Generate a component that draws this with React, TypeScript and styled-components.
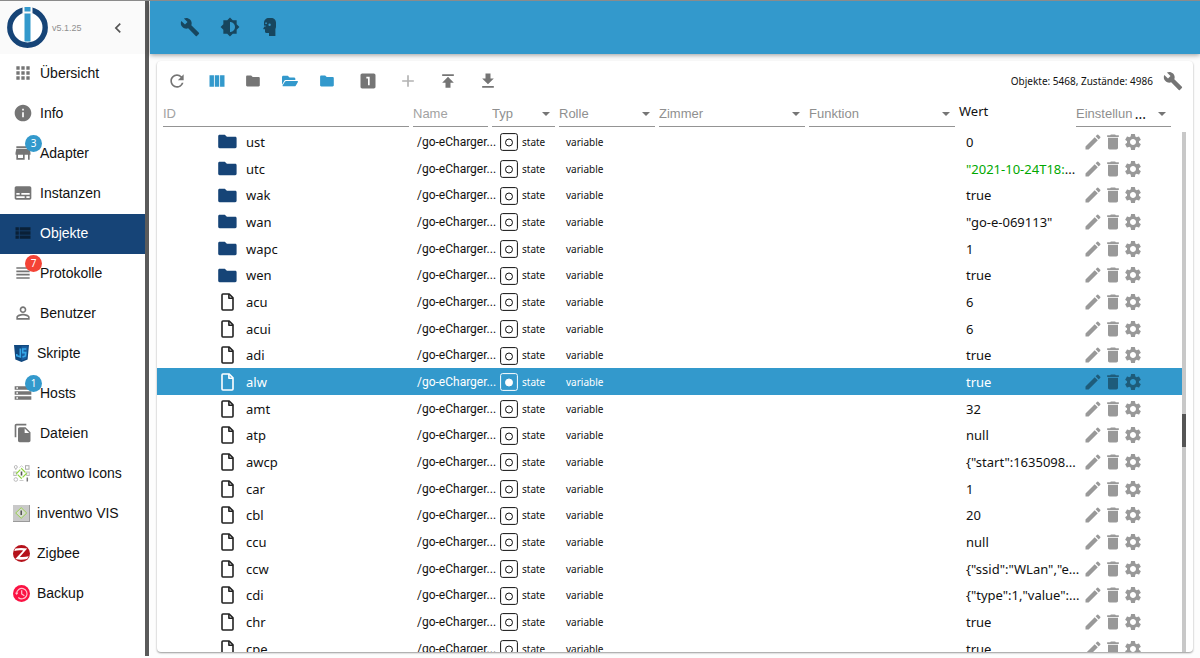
import React from "react";
import styled, { createGlobalStyle, css } from "styled-components";
import {
  MdAdd,
  MdApps,
  MdBrightness6,
  MdBuild,
  MdChevronLeft,
  MdDelete,
  MdEdit,
  MdFileCopy,
  MdFolder,
  MdGetApp,
  MdInfo,
  MdLooksOne,
  MdPermIdentity,
  MdPublish,
  MdRefresh,
  MdSettings,
  MdStorage,
  MdStore,
  MdSubtitles,
  MdViewColumn,
  MdViewHeadline,
  MdViewList,
} from "react-icons/md";
import { FaFolderOpen } from "react-icons/fa";

const blue = "#3399cc";
const navy = "#164477";
const iconGrey = "rgba(0, 0, 0, 0.54)";
const sans = `"Liberation Sans", Arial, sans-serif`;
const humanist = `"Noto Sans", Tahoma, sans-serif`;
const narrow = `Roboto, Tahoma, sans-serif`;

const GlobalStyle = createGlobalStyle`
  *, *::before, *::after { box-sizing: border-box; }
  body { margin: 0; background: #fff; color: #111; font-family: ${sans}; font-size: 13px; }
  button, input, select { font: inherit; color: inherit; margin: 0; padding: 0; border: 0; background: none; border-radius: 0; }
  button { cursor: pointer; }
  svg { display: block; flex: none; }
`;

const Shell = styled.div`
  display: flex;
  height: 100vh;
  overflow: hidden;
  border-top: 1px solid #8b8b8b;
`;

/* ---------- sidebar ---------- */

const Sidebar = styled.aside`
  flex: none;
  width: 145px;
  background: #fff;
`;

const Resizer = styled.div`
  flex: none;
  width: 4px;
  margin: 0 1px 2px 0;
  background: #5b5b5b;
`;

const Brand = styled.div`
  display: flex;
  align-items: center;
  height: 53px;
  padding: 0 17px 0 7px;
  background: #fafafa;
`;

const Version = styled.span`
  flex: 1;
  padding-left: 4px;
  font-size: 9px;
  color: #8f8f8f;
`;

const Collapse = styled.button`
  color: #555;
`;

const Menu = styled.nav`
  display: flex;
  flex-direction: column;
`;

const MenuItem = styled.a<{ $active?: boolean }>`
  display: flex;
  align-items: center;
  gap: 7px;
  height: 40px;
  padding: 0 0 2px 13px;
  text-decoration: none;
  white-space: nowrap;
  font-size: 14px;
  color: ${(p) => (p.$active ? "#fff" : "#111")};
  background: ${(p) => (p.$active ? navy : "transparent")};
`;

const MenuIcon = styled.span<{ $active?: boolean }>`
  position: relative;
  color: ${(p) => (p.$active ? "#0a2037" : iconGrey)};
`;

const Badge = styled.span<{ $color: string }>`
  position: absolute;
  top: -8px;
  right: -9px;
  width: 17px;
  height: 17px;
  border-radius: 9px;
  background: ${(p) => p.$color};
  color: #fff;
  font-family: ${humanist};
  font-size: 10px;
  line-height: 17px;
  text-align: center;
`;

/* ---------- main area ---------- */

const Main = styled.main`
  display: flex;
  flex: 1;
  flex-direction: column;
  min-width: 0;
  background: #fdfdfd;
`;

const AppBar = styled.header`
  display: flex;
  flex: none;
  align-items: center;
  gap: 20px;
  height: 53px;
  padding: 0 0 2px 30px;
  background: ${blue};
  box-shadow: 0 1px 5px rgba(0, 0, 0, 0.4);
  z-index: 1;
`;

const BarButton = styled.button`
  color: ${iconGrey};
`;

const Card = styled.section`
  display: flex;
  flex: 1;
  flex-direction: column;
  min-height: 0;
  margin: 7px 7px 6px;
  border-radius: 4px;
  overflow: hidden;
  background: #fff;
  box-shadow: 0 1px 2px rgba(0, 0, 0, 0.4);
`;

const Toolbar = styled.div`
  display: flex;
  flex: none;
  align-items: center;
  height: 40px;
  padding-bottom: 1px;
`;

const ToolButton = styled.button<{ $compact?: boolean; $color?: string }>`
  display: flex;
  justify-content: center;
  width: ${(p) => (p.$compact ? 37 : 40)}px;
  padding-right: ${(p) => (p.$compact ? 6 : 0)}px;
  color: ${(p) => p.$color ?? iconGrey};
`;

const Stats = styled.span`
  margin-left: auto;
  font-family: ${humanist};
  font-size: 10px;
`;

const Content = styled.div`
  display: flex;
  flex: 1;
  min-height: 0;
  padding-right: 7px;
`;

const Scroller = styled.div`
  flex: 1;
  min-width: 0;
  overflow: hidden;
`;

const ScrollTrack = styled.div`
  display: flex;
  flex: none;
  flex-direction: column;
  width: 4px;
  margin-top: 31px;
  background: #c8c8c8;
`;

const ScrollThumb = styled.div`
  height: 33px;
  margin-top: 282px;
  background: #555;
`;

const Table = styled.table`
  width: 100%;
  table-layout: fixed;
  border-collapse: collapse;
  font-family: ${humanist};
  font-size: 13px;
  line-height: 20px;
`;

const Col = styled.col<{ $width?: number }>`
  width: ${(p) => (p.$width ? `${p.$width}px` : "auto")};
`;

const Head = styled.th<{ $first?: boolean; $last?: boolean }>`
  height: 27px;
  padding: 0 ${(p) => (p.$last ? 11 : 2)}px 0 ${(p) => (p.$first ? 6 : 2)}px;
  font-weight: 400;
  text-align: left;
  vertical-align: top;
`;

const fieldLook = css`
  display: block;
  width: 100%;
  height: 26px;
  border-bottom: 1px solid #949494;
  outline: 0;
  font-family: ${sans};
  font-size: 13px;
  color: #8f8f8f;
`;

const FilterInput = styled.input`
  ${fieldLook}
  &::placeholder { color: #a2a2a2; opacity: 1; }
`;

const SelectWrap = styled.span`
  position: relative;
  display: block;
`;

const FilterSelect = styled.select`
  ${fieldLook}
  appearance: none;
`;

const SelectTail = styled.span`
  position: absolute;
  top: 0;
  right: 5px;
  display: flex;
  align-items: center;
  gap: 12px;
  height: 26px;
  font-size: 14px;
  pointer-events: none;
`;

const Row = styled.tr<{ $selected?: boolean }>`
  height: 27px;
  &:nth-child(3n) { height: 26px; }
  background: ${(p) => (p.$selected ? blue : "transparent")};
  color: ${(p) => (p.$selected ? "#fff" : "#111")};
`;

const Cell = styled.td<{ $indent?: number; $size?: number }>`
  padding: 0 0 0 ${(p) => p.$indent ?? 0}px;
  white-space: nowrap;
  vertical-align: middle;
  font-size: ${(p) => p.$size ?? 13}px;
`;

const NameCell = styled(Cell)`
  font-family: ${narrow};
`;

const Inline = styled.div<{ $gap?: number }>`
  display: flex;
  align-items: center;
  gap: ${(p) => p.$gap ?? 0}px;
`;

const NodeIcon = styled.span<{ $folder?: boolean; $selected?: boolean }>`
  display: flex;
  justify-content: center;
  width: 28px;
  color: ${(p) => (p.$folder ? navy : p.$selected ? "#fff" : "#222")};
`;

const Value = styled.span<{ $fresh?: boolean }>`
  color: ${(p) => (p.$fresh ? "#00a800" : "inherit")};
`;

const RowButton = styled.button`
  color: rgba(0, 0, 0, 0.4);
`;

/* ---------- drawings ---------- */

const Logo = () => (
  <svg width="41" height="41" viewBox="0 0 41 41" aria-label="ioBroker">
    <circle cx="20.5" cy="20.5" r="17.7" fill="#fff" stroke={navy} strokeWidth="5.4" />
    <rect x="15.5" y="0" width="10" height="8" fill="#fafafa" />
    <rect x="17.5" y="0" width="6" height="4.5" fill={blue} />
    <rect x="17.5" y="6.5" width="6" height="28" fill={blue} />
  </svg>
);

const ExpertIcon = () => (
  <svg width="20" height="20" viewBox="0 0 20 20" fill="currentColor">
    <path
      fillRule="evenodd"
      d="M8.800 1h2.400C13.900 1 16 3 16 5.600v3.900c0 .9-.2 1.700-.6 2.400V19H9v-3H6.200c-.7 0-1.200-.5-1.200-1.200v-2.600H3.700c-.4 0-.6-.4-.4-.8l.7-1.200V5.800C4 3.100 6.100 1 8.800 1zM5.300 5.600v1.500h1.500V5.600zM8.400 7.700a1.200 1.200 0 1 0 2.400 0 1.200 1.200 0 0 0-2.400 0zM4.200 8.600v1.100h1.300V8.600z"
    />
  </svg>
);

const ScriptIcon = () => (
  <svg width="17" height="17" viewBox="0 0 17 17">
    <path d="M1 0h15l-1.400 14.600L8.500 17l-6.100-2.400z" fill="#10487f" />
    <path d="M8.500 1.300h6.100l-1.200 12.300-4.900 1.900z" fill="#1b5fa0" />
    <path d="M7.300 3.500v8.300L3.800 10.700V9M13.300 4H9.700v3.600h3l-.3 3.400-2.900 1" fill="none" stroke="#35a7e8" strokeWidth="1.600" />
  </svg>
);

const IcontwoIcon = () => (
  <svg width="17" height="17" viewBox="0 0 17 17" fill="none">
    <circle cx="2.800" cy="2" r="1.500" stroke="#bbb" />
    <path d="M2.800 3.500V5" stroke="#bbb" />
    <path d="M6.500 2.500 8.500.8l2 1.700" stroke="#ccc" />
    <rect x="12.500" y=".7" width="3.500" height="3.500" stroke="#aaa" />
    <rect x=".8" y="7" width="2.500" height="3.500" stroke="#bbb" />
    <rect x="13.700" y="7" width="2.500" height="3.500" stroke="#bbb" />
    <circle cx="2.800" cy="14.500" r="1.800" stroke="#bbb" />
    <path d="M6.500 15.500h4" stroke="#ccc" />
    <path d="M14.300 12.500v4" stroke="#777" strokeWidth="1.500" />
    <path d="M8.500 3.500 13.500 8.500 8.500 13.500 3.500 8.500z" fill="#fff" stroke="#8fd43e" strokeWidth="1.200" strokeDasharray="5.600 1.400" />
    <path d="M8.500 6.500v4" stroke="#555" strokeWidth="1.600" />
  </svg>
);

const InventwoIcon = () => (
  <svg width="17" height="17" viewBox="0 0 17 17" fill="none">
    <rect width="17" height="17" fill="#9a9a9a" />
    <rect width="16" height="16" fill="#c9c9c9" />
    <path d="M8.200 2.700 13.700 8l-5.500 5.300L2.700 8z" fill="#d8dbd2" stroke="#98cf4f" />
    <path d="M8.200 5.500v4.500" stroke="#444" strokeWidth="1.400" />
  </svg>
);

const ZigbeeIcon = () => (
  <svg width="17" height="17" viewBox="0 0 17 17">
    <circle cx="8.500" cy="8.500" r="8.500" fill="#b5121b" />
    <path d="M2.500 3.600C6 2.600 10.500 2.700 14.200 3.600L6.800 11.900c3.300.3 6 .1 9-.6-.5 1-1.100 1.900-1.800 2.600-3.500.9-7.500 1-11.700.2L10.200 5.600C7.500 5.200 4.500 5.200 1.300 5.900c.3-.9.7-1.600 1.200-2.300z" fill="#fff" />
  </svg>
);

const BackupIcon = () => (
  <svg width="17" height="17" viewBox="0 0 17 17" fill="none">
    <circle cx="8.500" cy="8.500" r="8.500" fill="#fb1243" />
    <path d="M3.600 8.500A5.200 5.200 0 1 1 5.300 12.500" stroke="#ffc4d0" strokeWidth="1.200" />
    <path d="M1.900 7.800h3.500l-1.700 2.200z" fill="#ffc4d0" />
    <path d="M8.700 5.300v3.600l2.700 1.800" stroke="#ffc4d0" strokeWidth="1.200" />
  </svg>
);

const FolderGlyph = () => (
  <svg width="14" height="14" viewBox="0 0 14 14" fill="currentColor">
    <path d="M1.300 1.500h3.900l1.500 1.600h5.900c.7 0 1.200.5 1.200 1.100v7c0 .7-.5 1.200-1.200 1.200H1.300c-.7 0-1.200-.5-1.200-1.200V2.700c0-.7.5-1.200 1.200-1.200z" />
  </svg>
);

const NodeFolder = () => (
  <svg width="19" height="15" viewBox="0 0 19 15" fill="currentColor">
    <path d="M1.600.8h5.200l2.100 2h8.300c.8 0 1.400.6 1.400 1.400v8.600c0 .8-.6 1.400-1.400 1.400H1.600c-.8 0-1.400-.6-1.400-1.400V2.200C.2 1.400.8.8 1.600.8z" />
  </svg>
);

const FileGlyph = () => (
  <svg width="13" height="18" viewBox="0 0 13 18" fill="none" stroke="currentColor" strokeWidth="1.600" strokeLinejoin="round">
    <path d="M1.900 1h6.300L12 4.900v11.200a.9.900 0 0 1-.9.900H1.900a.9.900 0 0 1-.9-.9V1.900A.9.900 0 0 1 1.900 1z" />
    <path d="M7.900 1v4.200H12" />
  </svg>
);

const StateGlyph = ({ filled }: { filled?: boolean }) => (
  <svg width="18" height="19" viewBox="0 0 18 19" fill="none" stroke="currentColor">
    <rect x=".6" y="1.600" width="16.800" height="16.800" rx="2" strokeWidth="1" />
    <circle cx="9" cy="10.500" r="3.500" strokeWidth="1" fill={filled ? "currentColor" : "none"} />
  </svg>
);

const Caret = () => (
  <svg width="8" height="4" viewBox="0 0 8 4" fill="#757575">
    <path d="M0 0h8L4 4z" />
  </svg>
);

/* ---------- data ---------- */

type MenuEntry = {
  label: string;
  icon: React.ReactNode;
  active?: boolean;
  badge?: { text: string; color: string };
};

const menu: MenuEntry[] = [
  { label: "Übersicht", icon: <MdApps size={20} /> },
  { label: "Info", icon: <MdInfo size={20} /> },
  { label: "Adapter", icon: <MdStore size={20} />, badge: { text: "3", color: blue } },
  { label: "Instanzen", icon: <MdSubtitles size={20} /> },
  { label: "Objekte", icon: <MdViewList size={20} />, active: true },
  { label: "Protokolle", icon: <MdViewHeadline size={20} />, badge: { text: "7", color: "#f44336" } },
  { label: "Benutzer", icon: <MdPermIdentity size={20} /> },
  { label: "Skripte", icon: <ScriptIcon /> },
  { label: "Hosts", icon: <MdStorage size={20} />, badge: { text: "1", color: blue } },
  { label: "Dateien", icon: <MdFileCopy size={20} /> },
  { label: "icontwo Icons", icon: <IcontwoIcon /> },
  { label: "inventwo VIS", icon: <InventwoIcon /> },
  { label: "Zigbee", icon: <ZigbeeIcon /> },
  { label: "Backup", icon: <BackupIcon /> },
];

type ObjectRow = { id: string; value: string; folder?: boolean; cut?: boolean; fresh?: boolean };

const objects: ObjectRow[] = [
  { id: "ust", value: "0", folder: true },
  { id: "utc", value: '"2021-10-24T18:', folder: true, cut: true, fresh: true },
  { id: "wak", value: "true", folder: true },
  { id: "wan", value: '"go-e-069113"', folder: true },
  { id: "wapc", value: "1", folder: true },
  { id: "wen", value: "true", folder: true },
  { id: "acu", value: "6" },
  { id: "acui", value: "6" },
  { id: "adi", value: "true" },
  { id: "alw", value: "true" },
  { id: "amt", value: "32" },
  { id: "atp", value: "null" },
  { id: "awcp", value: '{"start":1635098', cut: true },
  { id: "car", value: "1" },
  { id: "cbl", value: "20" },
  { id: "ccu", value: "null" },
  { id: "ccw", value: '{"ssid":"WLan","e', cut: true },
  { id: "cdi", value: '{"type":1,"value":', cut: true },
  { id: "chr", value: "true" },
  { id: "cpe", value: "true" },
];

const selectedId = "alw";

const SelectFilter = ({ label, clipped }: { label: string; clipped?: boolean }) => (
  <SelectWrap>
    <FilterSelect aria-label={label} defaultValue="">
      <option value="">{label}</option>
    </FilterSelect>
    <SelectTail>
      {clipped && <span>...</span>}
      <Caret />
    </SelectTail>
  </SelectWrap>
);

const ObjectLine = ({ row }: { row: ObjectRow }) => {
  const selected = row.id === selectedId;
  return (
    <Row $selected={selected}>
      <Cell $indent={56}>
        <Inline $gap={5}>
          <NodeIcon $folder={row.folder} $selected={selected}>
            {row.folder ? <NodeFolder /> : <FileGlyph />}
          </NodeIcon>
          {row.id}
        </Inline>
      </Cell>
      <NameCell $indent={6} $size={12}>/go-eCharger...</NameCell>
      <Cell $indent={10} $size={10}>
        <Inline $gap={4}>
          <StateGlyph filled={selected} />
          state
        </Inline>
      </Cell>
      <Cell $indent={9} $size={10}>variable</Cell>
      <Cell />
      <Cell />
      <Cell $indent={9}>
        <Value $fresh={row.fresh}>{row.value}</Value>
        {row.cut && "..."}
      </Cell>
      <Cell $indent={9}>
        <Inline>
          <RowButton aria-label={`${row.id} bearbeiten`}><MdEdit size={20} /></RowButton>
          <RowButton aria-label={`${row.id} löschen`}><MdDelete size={20} /></RowButton>
          <RowButton aria-label={`${row.id} konfigurieren`}><MdSettings size={20} /></RowButton>
        </Inline>
      </Cell>
    </Row>
  );
};

export default function App() {
  return (
    <>
      <GlobalStyle />
      <Shell>
        <Sidebar>
          <Brand>
            <Logo />
            <Version>v5.1.25</Version>
            <Collapse aria-label="Menü einklappen"><MdChevronLeft size={20} /></Collapse>
          </Brand>
          <Menu>
            {menu.map((entry) => (
              <MenuItem key={entry.label} href="#" $active={entry.active}>
                <MenuIcon $active={entry.active}>
                  {entry.icon}
                  {entry.badge && <Badge $color={entry.badge.color}>{entry.badge.text}</Badge>}
                </MenuIcon>
                {entry.label}
              </MenuItem>
            ))}
          </Menu>
        </Sidebar>
        <Resizer />
        <Main>
          <AppBar>
            <BarButton aria-label="Einstellungen"><MdBuild size={20} /></BarButton>
            <BarButton aria-label="Farbschema"><MdBrightness6 size={20} /></BarButton>
            <BarButton aria-label="Expertenmodus"><ExpertIcon /></BarButton>
          </AppBar>
          <Card>
            <Toolbar>
              <ToolButton aria-label="Aktualisieren"><MdRefresh size={20} /></ToolButton>
              <ToolButton aria-label="Spalten" $color={blue}><MdViewColumn size={20} /></ToolButton>
              <ToolButton aria-label="Alle einklappen" $compact><FolderGlyph /></ToolButton>
              <ToolButton aria-label="Alle ausklappen" $compact $color={blue}><FaFolderOpen size={16} /></ToolButton>
              <ToolButton aria-label="Ebene einklappen" $compact $color={blue}><FolderGlyph /></ToolButton>
              <ToolButton aria-label="Ebene 1"><MdLooksOne size={20} /></ToolButton>
              <ToolButton aria-label="Hinzufügen" $color="rgba(0, 0, 0, 0.3)"><MdAdd size={20} /></ToolButton>
              <ToolButton aria-label="Hochladen"><MdPublish size={20} /></ToolButton>
              <ToolButton aria-label="Herunterladen"><MdGetApp size={20} /></ToolButton>
              <Stats>Objekte: 5468, Zustände: 4986</Stats>
              <ToolButton aria-label="Ansicht anpassen"><MdBuild size={20} /></ToolButton>
            </Toolbar>
            <Content>
              <Scroller>
                <Table>
                  <colgroup>
                    <Col />
                    <Col $width={79} />
                    <Col $width={67} />
                    <Col $width={100} />
                    <Col $width={150} />
                    <Col $width={150} />
                    <Col $width={117} />
                    <Col $width={108} />
                  </colgroup>
                  <thead>
                    <tr>
                      <Head $first><FilterInput aria-label="ID" placeholder="ID" /></Head>
                      <Head><FilterInput aria-label="Name" placeholder="Name" /></Head>
                      <Head><SelectFilter label="Typ" /></Head>
                      <Head><SelectFilter label="Rolle" /></Head>
                      <Head><SelectFilter label="Zimmer" /></Head>
                      <Head><SelectFilter label="Funktion" /></Head>
                      <Head>Wert</Head>
                      <Head $last><SelectFilter label="Einstellun" clipped /></Head>
                    </tr>
                  </thead>
                  <tbody>
                    {objects.map((row) => (
                      <ObjectLine key={row.id} row={row} />
                    ))}
                  </tbody>
                </Table>
              </Scroller>
              <ScrollTrack>
                <ScrollThumb />
              </ScrollTrack>
            </Content>
          </Card>
        </Main>
      </Shell>
    </>
  );
}
